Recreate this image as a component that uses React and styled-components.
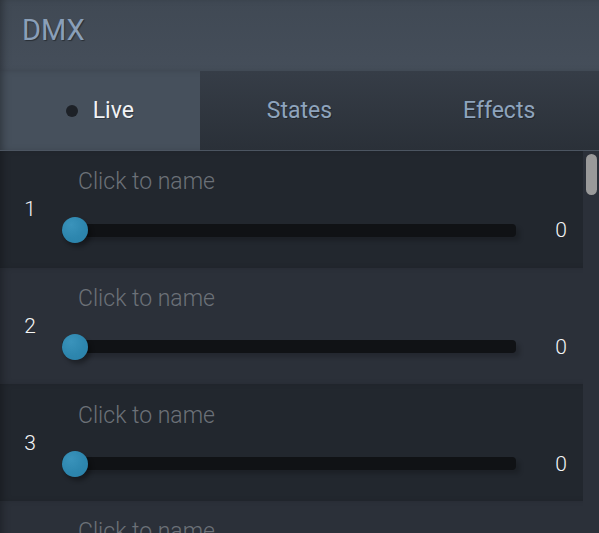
import React from "react";
import styled, { createGlobalStyle } from "styled-components";

const GlobalStyle = createGlobalStyle`
  html, body {
    margin: 0;
    padding: 0;
    background: #22272e;
    font-family: Roboto, "Liberation Sans", sans-serif;
  }
  * { box-sizing: border-box; }
`;

const Panel = styled.div`
  width: 599px;
  height: 533px;
  display: flex;
  flex-direction: column;
  overflow: hidden;
  background: #22272e;
`;

const Header = styled.div`
  height: 71px;
  flex: none;
  padding: 12px 22px 0;
  background: linear-gradient(180deg, #404954 0%, #454e5a 100%);
  box-shadow: inset 6px 0 8px -4px rgba(0, 0, 0, 0.35);
`;

const Title = styled.h1`
  margin: 0;
  font-size: 29px;
  line-height: 36px;
  font-weight: 400;
  color: #8a9fb8;
  text-shadow: 1px 1px 1px rgba(0, 0, 0, 0.4);
`;

const Tabs = styled.div`
  height: 80px;
  flex: none;
  display: grid;
  grid-template-columns: repeat(3, 1fr);
  border-bottom: 1px solid #4c5561;
`;

const Tab = styled.div`
  display: flex;
  align-items: center;
  justify-content: center;
  gap: 15px;
  font-size: 23px;
  font-weight: 400;
  color: ${(p) => (p.$active ? "#f2f3f5" : "#8ea4bd")};
  text-shadow: 1px 1px 0 rgba(0, 0, 0, 0.3);
  background: ${(p) =>
    p.$active
      ? "#46505c"
      : "linear-gradient(180deg, #363d47 0%, #2a3038 100%)"};
  box-shadow: ${(p) =>
    p.$active ? "inset 6px 0 8px -4px rgba(0, 0, 0, 0.35)" : "none"};
`;

const Dot = styled.span`
  width: 12px;
  height: 12px;
  border-radius: 50%;
  background: #1d2127;
`;

const ListArea = styled.div`
  flex: 1;
  min-height: 0;
  display: flex;
`;

const List = styled.div`
  flex: 1;
  overflow-y: scroll;
  scrollbar-width: none;

  &::-webkit-scrollbar {
    display: none;
  }
`;

const Rail = styled.div`
  width: 16px;
  flex: none;
  background: #2b3039;
  padding: 3px 2px 0 3px;
`;

const Thumb = styled.div`
  height: 41px;
  border-radius: 6px;
  background: #9a9a9a;
`;

const Row = styled.div`
  height: 116.67px;
  display: flex;
  align-items: center;
  background: ${(p) => (p.$odd ? "#2b3039" : "#22272e")};
  box-shadow: inset 6px 0 8px -4px rgba(0, 0, 0, 0.3);
`;

const Channel = styled.div`
  width: 62px;
  flex: none;
  text-align: center;
  font-size: 21px;
  font-weight: 300;
  color: #f4f5f6;
  padding-right: 2px;
`;

const Body = styled.div`
  flex: 1;
  display: flex;
  flex-direction: column;
  padding-bottom: 6px;
`;

const Name = styled.div`
  padding-left: 16px;
  font-size: 23px;
  line-height: 26px;
  font-weight: 300;
  color: #6c7178;
  margin-bottom: 22px;
`;

const SliderLine = styled.div`
  display: flex;
  align-items: center;
  height: 26px;
`;

const Track = styled.div`
  position: relative;
  width: 454px;
  height: 13px;
  border-radius: 4px;
  background: #101215;
  box-shadow: 4px 4px 4px rgba(0, 0, 0, 0.18);
`;

const Knob = styled.div`
  position: absolute;
  top: 50%;
  margin-top: -13px;
  left: 0;
  width: 26px;
  height: 26px;
  border-radius: 50%;
  background: radial-gradient(circle at 35% 30%, #3a93bb 0%, #2d86ae 55%, #2a81a9 100%);
  box-shadow: 3px 4px 4px rgba(0, 0, 0, 0.3);
`;

const Value = styled.div`
  flex: 1;
  text-align: center;
  font-size: 21px;
  font-weight: 300;
  color: #f4f5f6;
  padding-left: 23px;
`;

const channels = Array.from({ length: 32 }, (_, i) => ({ id: i + 1, value: 0 }));

export default function App() {
  return (
    <Panel>
      <GlobalStyle />
      <Header>
        <Title>DMX</Title>
      </Header>
      <Tabs>
        <Tab $active>
          <Dot />
          Live
        </Tab>
        <Tab>States</Tab>
        <Tab>Effects</Tab>
      </Tabs>
      <ListArea>
        <List>
          {channels.map((c, i) => (
            <Row key={c.id} $odd={i % 2 === 1}>
              <Channel>{c.id}</Channel>
              <Body>
                <Name>Click to name</Name>
                <SliderLine>
                  <Track>
                    <Knob style={{ left: `${(c.value / 255) * 428}px` }} />
                  </Track>
                  <Value>{c.value}</Value>
                </SliderLine>
              </Body>
            </Row>
          ))}
        </List>
        <Rail>
          <Thumb />
        </Rail>
      </ListArea>
    </Panel>
  );
}
